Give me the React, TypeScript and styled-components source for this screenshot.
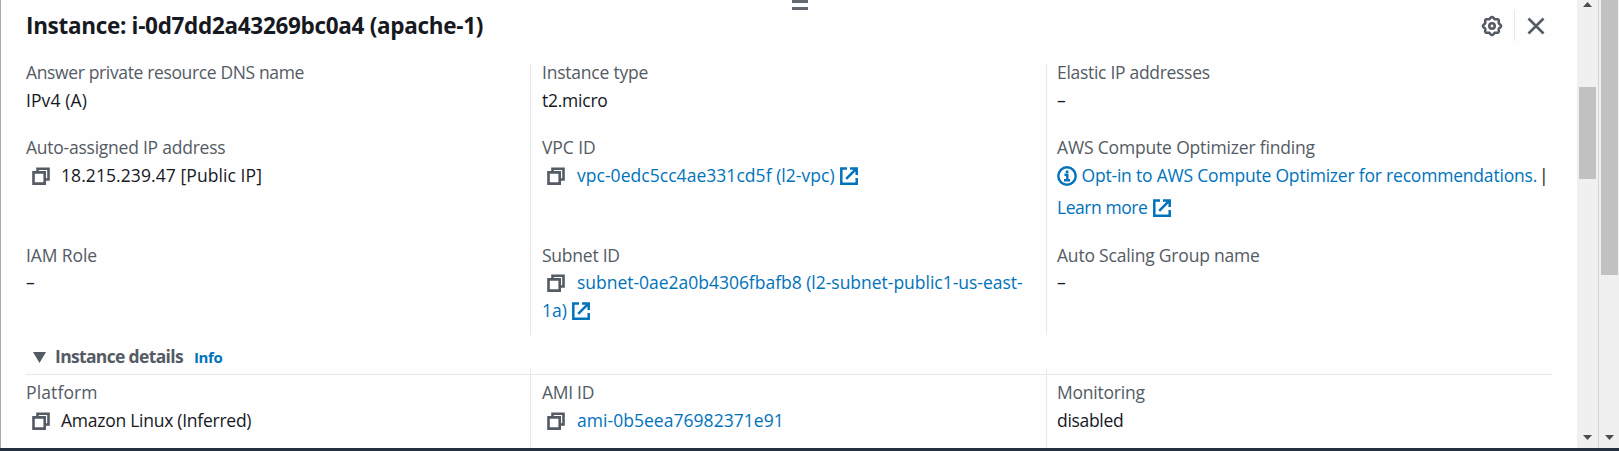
import React from 'react';
import styled, { createGlobalStyle } from 'styled-components';

const Global = createGlobalStyle`
  * { box-sizing: border-box; }
  body { margin: 0; background: #fefefe; overflow: hidden; }
`;

const c = { text: '#16191f', label: '#545b64', link: '#0073bb', line: '#e6e8e8' };

const Screen = styled.div`
  display: flex;
  flex-direction: column;
  width: 1619px;
  height: 451px;
  font-family: 'Open Sans', 'Noto Sans', sans-serif;
  font-size: 17.5px;
  line-height: 27.5px;
  color: ${c.text};
`;
const Main = styled.div`
  display: flex;
  height: 448px;
`;
const BottomBar = styled.footer`
  height: 3px;
  background: #232f3e;
`;
const Panel = styled.section`
  position: relative;
  flex: 1;
  border-left: 1px solid #a9a9a9;
  background: #fefefe;
  padding: 0 25px;
`;
const DragHandle = styled.div`
  position: absolute;
  top: 0;
  left: 791px;
  width: 16px;
  height: 10px;
  border: solid #646a71;
  border-width: 3px 0;
`;
const Header = styled.header`
  display: flex;
  justify-content: space-between;
  height: 58.5px;
`;
const Title = styled.h2`
  margin: 11px 0 0;
  font-size: 22.5px;
  line-height: 30px;
  font-weight: 700;
  letter-spacing: -0.31px;
`;
const Actions = styled.div`
  display: flex;
  align-items: center;
  height: 31px;
  margin: 10px 5px 0 0;
`;
const IconButton = styled.button`
  display: flex;
  align-items: center;
  justify-content: center;
  width: 22px;
  height: 31px;
  padding: 0;
  border: 0;
  background: none;
  color: ${c.label};
`;
const ActionDivider = styled.span`
  width: 1px;
  height: 31px;
  margin: 0 10px 0 11px;
  background: ${c.line};
`;
const Columns = styled.div<{ $ruled?: boolean }>`
  position: relative;
  display: grid;
  grid-template-columns: 504px 516px 506px;
  height: ${p => (p.$ruled ? '79px' : '277px')};
`;
const RuledColumns = styled(Columns)`
  &::before {
    content: '';
    position: absolute;
    top: 5px;
    left: 0;
    right: 0;
    height: 1px;
    background: ${c.line};
  }
`;
const Column = styled.div<{ $top?: number }>`
  position: relative;
  display: grid;
  align-content: start;
  grid-template-rows: ${p => (p.$top ? '55px' : '55px 88px 82.5px')};
  row-gap: 20px;
  padding-top: ${p => p.$top ?? 0}px;
`;
const DividedColumn = styled(Column)<{ $pad: number }>`
  padding-left: ${p => p.$pad}px;
  &::before {
    content: '';
    position: absolute;
    left: 0;
    top: ${p => (p.$top ? 0 : 5.5)}px;
    bottom: ${p => (p.$top ? 0 : 1)}px;
    width: 1px;
    background: ${c.line};
  }
`;
const Field = styled.dl`
  margin: 0;
  white-space: nowrap;
`;
const Label = styled.dt<{ $ls?: number }>`
  color: ${c.label};
  letter-spacing: ${p => p.$ls ?? 0}px;
`;
const Value = styled.dd<{ $ls?: number; $tight?: boolean }>`
  margin: ${p => (p.$tight ? 0 : 0.6)}px 0 0;
  letter-spacing: ${p => p.$ls ?? 0}px;
`;
const Link = styled.a<{ $ls?: number }>`
  color: ${c.link};
  letter-spacing: ${p => p.$ls ?? 0}px;
`;
const LearnMore = styled.div`
  padding-top: 5px;
`;
const Bar = styled.span`
  margin-left: 2px;
`;
const SectionHeader = styled.div`
  display: flex;
  align-items: baseline;
  height: 33.5px;
  padding: 7px 0 0 7px;
`;
const SectionTitle = styled.h3`
  margin: 0 0 0 9px;
  font-size: 17.5px;
  font-weight: 700;
  color: ${c.label};
  letter-spacing: -0.66px;
`;
const InfoLink = styled.a`
  margin-left: 11px;
  font-size: 15px;
  font-weight: 700;
  color: ${c.link};
  letter-spacing: -0.38px;
`;
const Track = styled.div<{ $outer?: boolean }>`
  display: flex;
  flex-direction: column;
  justify-content: space-between;
  width: 21px;
  border-left: ${p => (p.$outer ? '1px solid #d5d5d5' : '0')};
  background: #f0f0f0;
  padding: ${p => (p.$outer ? '0 1px 8px 2px' : '2px 2px 8px 2px')};
`;
const Thumb = styled.div<{ $h: number }>`
  width: 17px;
  height: ${p => p.$h}px;
  background: #c1c1c1;
`;
const ThumbGroup = styled.div`
  display: flex;
  flex-direction: column;
  gap: 80px;
`;
const Arrow = styled.svg`
  display: block;
  margin: 0 4px;
`;
const CopySvg = styled.svg<{ $inset: number }>`
  margin: 0 ${p => 17 - p.$inset}px 0 ${p => p.$inset}px;
  vertical-align: -3px;
  color: ${c.label};
`;
const ExternalSvg = styled.svg`
  margin-left: 5.5px;
  vertical-align: -3px;
  color: ${c.link};
`;
const InfoSvg = styled.svg`
  margin-right: 4.5px;
  vertical-align: -4px;
  color: ${c.link};
`;

const Copy = ({ inset = 5 }: { inset?: number }) => (
  <CopySvg $inset={inset} width="18" height="18" viewBox="0 0 18 18" fill="none" stroke="currentColor" strokeWidth="2.6">
    <path d="M1.5 5.4h11.2v11.2H1.5z" />
    <path d="M5.5 5V1.7h11v10.8h-3.4" />
  </CopySvg>
);
const External = () => (
  <ExternalSvg width="18" height="18" viewBox="0 0 18 18" fill="none" stroke="currentColor" strokeWidth="2.5">
    <path d="M7 1.4H1.3v15.3h15.4V11" />
    <path d="M10 1.4h6.7V8M16.4 1.7 6.2 11.8" />
  </ExternalSvg>
);
const InfoIcon = () => (
  <InfoSvg width="20" height="20" viewBox="0 0 20 20" fill="none" stroke="currentColor" strokeWidth="2.4">
    <circle cx="10" cy="10" r="8.7" />
    <path d="M7.5 8.8h2.8v5.4M7 14.2h6M8.8 5.7h2.6" />
  </InfoSvg>
);

const gearPath =
  Array.from({ length: 96 }, (_, i) => {
    const a = (i / 96) * Math.PI * 2;
    const r = 8.2 + 0.8 * Math.cos(8 * a);
    return `${i ? 'L' : 'M'}${(11 + r * Math.sin(a)).toFixed(2)} ${(11 - r * Math.cos(a)).toFixed(2)}`;
  }).join('') + 'Z';

const Down = () => (
  <Arrow width="9" height="5" viewBox="0 0 9 5"><path d="M0 0h9L4.5 5z" fill="#4d4d4d" /></Arrow>
);

export default function App() {
  return (
    <Screen>
      <Global />
      <Main>
        <Panel>
          <DragHandle />
          <Header>
            <Title>Instance: i-0d7dd2a43269bc0a4 (apache-1)</Title>
            <Actions>
              <IconButton aria-label="Settings">
                <svg width="22" height="22" viewBox="0 0 22 22" fill="none" stroke="currentColor" strokeWidth="2.6">
                  <path d={gearPath} />
                  <circle cx="11" cy="11" r="2.7" />
                </svg>
              </IconButton>
              <ActionDivider />
              <IconButton aria-label="Close">
                <svg width="18" height="18" viewBox="0 0 18 18" stroke="currentColor" strokeWidth="2.6">
                  <path d="M1.5 1.5l15 15M16.5 1.5l-15 15" />
                </svg>
              </IconButton>
            </Actions>
          </Header>
          <Columns>
            <Column>
              <Field>
                <Label $ls={-0.36}>Answer private resource DNS name</Label>
                <Value $ls={0.1}>IPv4 (A)</Value>
              </Field>
              <Field>
                <Label $ls={-0.24}>Auto-assigned IP address</Label>
                <Value $ls={0.08}><Copy inset={6} />18.215.239.47 [Public IP]</Value>
              </Field>
              <Field>
                <Label $ls={-0.1}>IAM Role</Label>
                <Value $tight>–</Value>
              </Field>
            </Column>
            <DividedColumn $pad={12}>
              <Field>
                <Label $ls={-0.22}>Instance type</Label>
                <Value $ls={-0.24}>t2.micro</Value>
              </Field>
              <Field>
                <Label $ls={-0.1}>VPC ID</Label>
                <Value><Copy /><Link $ls={0.04}>vpc-0edc5cc4ae331cd5f (l2-vpc)</Link><External /></Value>
              </Field>
              <Field>
                <Label $ls={-0.24}>Subnet ID</Label>
                <Value $tight>
                  <Copy /><Link $ls={-0.02}>subnet-0ae2a0b4306fbafb8 (l2-subnet-public1-us-east-<br />1a)</Link><External />
                </Value>
              </Field>
            </DividedColumn>
            <DividedColumn $pad={11}>
              <Field>
                <Label $ls={-0.3}>Elastic IP addresses</Label>
                <Value>–</Value>
              </Field>
              <Field>
                <Label $ls={-0.17}>AWS Compute Optimizer finding</Label>
                <Value>
                  <InfoIcon /><Link $ls={-0.2}>Opt-in to AWS Compute Optimizer for recommendations.</Link><Bar>|</Bar>
                  <LearnMore><Link $ls={-0.45}>Learn more</Link><External /></LearnMore>
                </Value>
              </Field>
              <Field>
                <Label $ls={-0.2}>Auto Scaling Group name</Label>
                <Value $tight>–</Value>
              </Field>
            </DividedColumn>
          </Columns>
          <SectionHeader>
            <svg width="13" height="11" viewBox="0 0 13 11"><path d="M0 0h13L6.5 11z" fill={c.label} /></svg>
            <SectionTitle>Instance details</SectionTitle>
            <InfoLink>Info</InfoLink>
          </SectionHeader>
          <RuledColumns $ruled>
            <Column $top={9.5}>
              <Field>
                <Label $ls={0.12}>Platform</Label>
                <Value $ls={-0.26}><Copy inset={6} />Amazon Linux (Inferred)</Value>
              </Field>
            </Column>
            <DividedColumn $pad={12} $top={9.5}>
              <Field>
                <Label $ls={-0.3}>AMI ID</Label>
                <Value><Copy /><Link $ls={0.04}>ami-0b5eea76982371e91</Link></Value>
              </Field>
            </DividedColumn>
            <DividedColumn $pad={11} $top={9.5}>
              <Field>
                <Label $ls={-0.22}>Monitoring</Label>
                <Value $ls={-0.31}>disabled</Value>
              </Field>
            </DividedColumn>
          </RuledColumns>
        </Panel>
        <Track>
          <ThumbGroup>
            <Arrow width="9" height="5" viewBox="0 0 9 5"><path d="M0 5h9L4.5 0z" fill="#4d4d4d" /></Arrow>
            <Thumb $h={92} />
          </ThumbGroup>
          <Down />
        </Track>
        <Track $outer>
          <Thumb $h={275} />
          <Down />
        </Track>
      </Main>
      <BottomBar />
    </Screen>
  );
}
